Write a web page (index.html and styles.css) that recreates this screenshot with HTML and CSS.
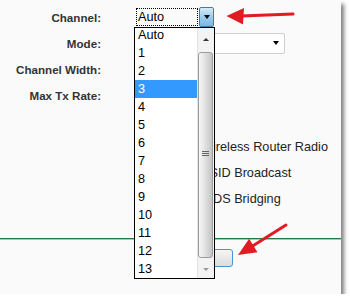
FILE: index.html
```html
<!DOCTYPE html>
<html>
<head>
<meta charset="utf-8">
<link rel="stylesheet" href="styles.css">
</head>
<body>
<div class="panel">
  <div class="form">
    <span class="label">Channel:</span>
    <div class="sel">
      <div class="focus">Auto</div>
      <div class="drop-btn"><span class="tri"></span></div>
    </div>
    <span class="label">Mode:</span>
    <div class="mode"><span class="tri"></span></div>
    <span class="label">Channel Width:</span>
    <span></span>
    <span class="label">Max Tx Rate:</span>
    <span></span>
  </div>

  <div class="checks">
    <span></span>
    <label class="check"><span class="box"></span>Enable Wireless Router Radio</label>
    <span></span>
    <label class="check"><span class="box"></span>Enable SSID Broadcast</label>
    <span></span>
    <label class="check"><span class="box"></span>Enable WDS Bridging</label>
  </div>

  <div class="rule"></div>

  <div class="actions">
    <span></span>
    <button class="save">Save</button>
  </div>

  <div class="listbox">
    <div class="items">
      <div class="items-inner">
        <div class="opt">Auto</div>
        <div class="opt">1</div>
        <div class="opt">2</div>
        <div class="opt hl">3</div>
        <div class="opt">4</div>
        <div class="opt">5</div>
        <div class="opt">6</div>
        <div class="opt">7</div>
        <div class="opt">8</div>
        <div class="opt">9</div>
        <div class="opt">10</div>
        <div class="opt">11</div>
        <div class="opt">12</div>
        <div class="opt">13</div>
      </div>
    </div>
    <div class="scroll">
      <span class="up"></span>
      <div class="thumb"><span class="grip"></span></div>
      <span class="down"></span>
    </div>
  </div>

  <svg class="arrows" width="341" height="294" viewBox="0 0 341 294">
    <line x1="241" y1="16" x2="293" y2="14" stroke="#e21b23" stroke-width="3" stroke-linecap="round"/>
    <polygon points="226.5,16 244,8 243,24.5" fill="#e21b23"/>
    <line x1="286" y1="225" x2="251" y2="247" stroke="#e21b23" stroke-width="3" stroke-linecap="round"/>
    <polygon points="238,255 249.1,238.7 257.5,252.3" fill="#e21b23"/>
  </svg>
</div>
</body>
</html>
```

FILE: styles.css
```css
* { box-sizing: border-box; }

body {
  margin: 0;
  background: #fff;
  font-family: "Liberation Sans", Arial, sans-serif;
}

.panel {
  position: relative;
  width: 341px;
  height: 294px;
  background: #fafafa;
  box-shadow: 3px 4px 4px rgba(0, 0, 0, 0.5);
}

.form {
  display: grid;
  grid-template-columns: 101px 1fr;
  column-gap: 33px;
  grid-auto-rows: 26px;
  align-items: center;
  padding-top: 4px;
}

.label {
  text-align: right;
  font-weight: bold;
  font-size: 11.6px;
  color: #333;
}

.sel {
  display: flex;
  width: 80px;
  height: 20px;
  padding: 1px 0 1px 2px;
  gap: 1px;
}

.focus {
  flex: 1;
  border: 1px dotted #000;
  font-size: 12.7px;
  line-height: 16px;
  padding-left: 1px;
  color: #000;
}

.drop-btn {
  width: 15px;
  margin-top: -1px;
  margin-bottom: -1px;
  border: 1px solid #3c7eb0;
  border-radius: 2px;
  background: linear-gradient(#d6ecfa, #9ccbeb 50%, #7bb8e2);
  display: flex;
  align-items: center;
  justify-content: center;
}

.tri {
  width: 0;
  height: 0;
  border-left: 3.5px solid transparent;
  border-right: 3.5px solid transparent;
  border-top: 4px solid #000;
}

.mode {
  width: 151px;
  height: 21px;
  border: 1px solid #cfcfcf;
  border-radius: 2px;
  background: #fff;
  display: flex;
  align-items: center;
  justify-content: flex-end;
  padding-right: 5px;
}

.checks {
  display: grid;
  grid-template-columns: 101px 1fr;
  column-gap: 33px;
  grid-auto-rows: 26px;
  align-items: center;
  margin-top: 26px;
}

.check {
  display: flex;
  align-items: center;
  gap: 6px;
  padding-left: 5px;
  font-size: 12.7px;
  color: #222;
  white-space: nowrap;
}

.box {
  width: 13px;
  height: 13px;
  border: 1px solid #888;
  background: #fff;
}

.rule {
  margin-top: 26px;
  height: 2px;
  border-top: 1px solid #257a42;
  background: #9ccfad;
}

.actions {
  display: grid;
  grid-template-columns: 101px 1fr;
  column-gap: 33px;
  margin-top: 9px;
}

.save {
  width: 99px;
  height: 18px;
  border: 1px solid #4596d4;
  border-radius: 3px;
  background: linear-gradient(#f6f6f6, #dcdcdc);
  font-family: "Liberation Sans", Arial, sans-serif;
  font-size: 12px;
  padding: 0;
}

.listbox {
  position: absolute;
  left: 134px;
  top: 27px;
  width: 81px;
  height: 252px;
  border: 1px solid #000;
  background: #fff;
  display: flex;
}

.items {
  flex: 1;
  overflow: hidden;
}

.items-inner {
  margin-top: -2px;
}

.opt {
  height: 18px;
  line-height: 18px;
  padding-left: 3px;
  font-size: 12.7px;
  color: #000;
}

.opt.hl {
  background: #3399ff;
  color: #fff;
}

.scroll {
  position: relative;
  width: 17px;
  background: #f3f3f3;
  border-left: 1px solid #e2e2e2;
}

.up {
  position: absolute;
  top: 10px;
  left: 5px;
  width: 0;
  height: 0;
  border-left: 3.5px solid transparent;
  border-right: 3.5px solid transparent;
  border-bottom: 3.5px solid #333;
}

.down {
  position: absolute;
  top: 240px;
  left: 5px;
  width: 0;
  height: 0;
  border-left: 3.5px solid transparent;
  border-right: 3.5px solid transparent;
  border-top: 3.5px solid #999;
}

.thumb {
  position: absolute;
  top: 24px;
  bottom: 20px;
  left: 0;
  right: 1px;
  border: 1px solid #9c9c9c;
  border-radius: 3px;
  background: linear-gradient(to right, #f7f7f7, #e2e2e2 45%, #cfcfcf 80%, #c4c4c4);
}

.grip {
  position: absolute;
  top: 98px;
  left: 3px;
  width: 7px;
  height: 5px;
  background: repeating-linear-gradient(#666 0 1px, transparent 1px 2px);
}

.arrows {
  position: absolute;
  left: 0;
  top: 0;
  pointer-events: none;
}
```
